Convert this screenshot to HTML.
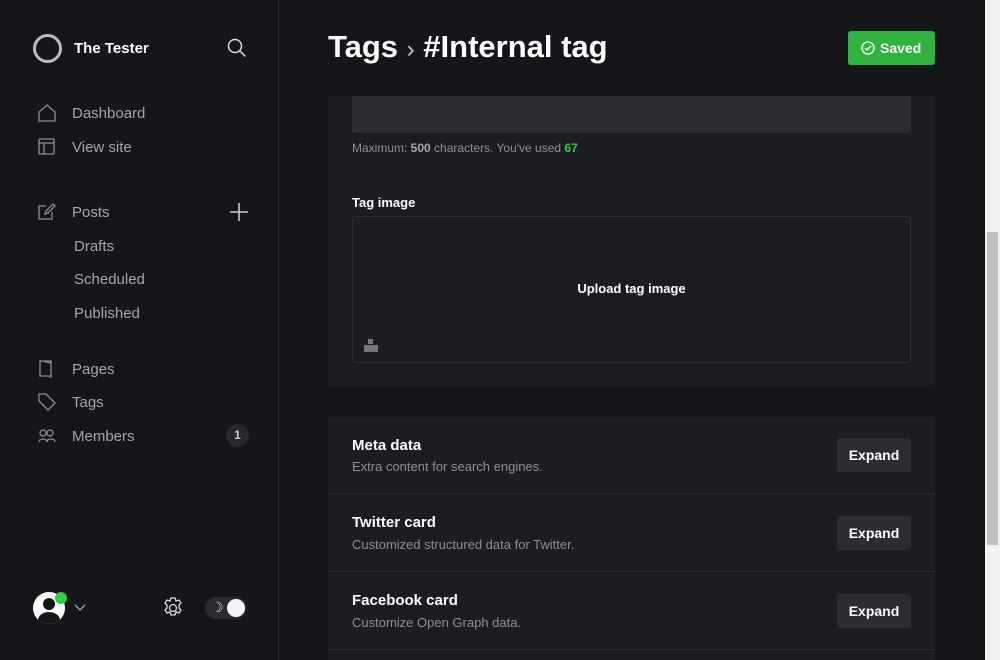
<!DOCTYPE html>
<html><head><meta charset="utf-8"><style>
*{box-sizing:border-box;margin:0;padding:0}
body{width:1000px;height:660px;overflow:hidden;background:#151619;font-family:"Liberation Sans",sans-serif;position:relative;color:#fff}
.sb{position:absolute;left:0;top:0;width:279px;height:660px;background:#151619;border-right:1px solid #26282b}
.t{position:absolute;white-space:nowrap}
.nav{color:#a3a6ab;font-size:15px}
.ic{position:absolute}
.scroll{position:absolute;left:985px;top:0;width:15px;height:660px;background:#f1f1f1}
.thumb{position:absolute;left:987px;top:232px;width:11px;height:313px;background:#c1c1c1}
.card{position:absolute;left:328px;width:607px;background:#1c1d20}
.btn{position:absolute;left:837px;width:74px;height:34px;background:#2b2d31;border-radius:3px;font-size:14px;font-weight:bold;color:#fff;text-align:center;line-height:34px}
.h{font-size:15px;font-weight:bold;left:352px}
.s{font-size:13px;color:#8c9096;left:352px}
</style></head><body>
<div class="sb">
<svg class="ic" style="left:32px;top:33px" width="31" height="31"><circle cx="15.5" cy="15.5" r="13" fill="none" stroke="#bbb" stroke-width="3"/></svg>
<div class="t" style="left:74px;top:40px;font-size:15px;font-weight:bold">The Tester</div>
<svg class="ic" style="left:227px;top:38px" width="20" height="20" fill="none" stroke="#ddd" stroke-width="1.5"><circle cx="8" cy="8" r="6.5"/><path d="M13 13l5.5 5.5"/></svg>
<svg class="ic" style="left:38px;top:104px" width="18" height="18" fill="none" stroke="#8b8e93" stroke-width="1.3"><path d="M1 8L9 1l8 7v9H1z"/></svg>
<div class="t nav" style="left:72px;top:105px">Dashboard</div>
<svg class="ic" style="left:38px;top:138px" width="18" height="18" fill="none" stroke="#8b8e93" stroke-width="1.3"><rect x="1" y="1" width="15" height="15" rx="1"/><path d="M1 5h15M6 5v11"/></svg>
<div class="t nav" style="left:72px;top:139px">View site</div>
<svg class="ic" style="left:38px;top:203px" width="18" height="18" fill="none" stroke="#8b8e93" stroke-width="1.3"><path d="M8 3H1v13h13V9M7 11l1-3 7-7 2 2-7 7z"/></svg>
<div class="t nav" style="left:72px;top:204px">Posts</div>
<svg class="ic" style="left:229px;top:202px" width="20" height="20" stroke="#ccc" stroke-width="1.6"><path d="M10 1v18M1 10h18"/></svg>
<div class="t nav" style="left:74px;top:238px">Drafts</div>
<div class="t nav" style="left:74px;top:271px">Scheduled</div>
<div class="t nav" style="left:74px;top:305px">Published</div>
<svg class="ic" style="left:38px;top:360px" width="18" height="18" fill="none" stroke="#8b8e93" stroke-width="1.3"><path d="M2 1h11v15H2zM5 1l8 2v15"/></svg>
<div class="t nav" style="left:72px;top:361px">Pages</div>
<svg class="ic" style="left:38px;top:393px" width="18" height="18" fill="none" stroke="#8b8e93" stroke-width="1.3"><path d="M1 1h7l9 9-7 7-9-9z"/></svg>
<div class="t nav" style="left:72px;top:394px">Tags</div>
<svg class="ic" style="left:38px;top:428px" width="18" height="16" fill="none" stroke="#8b8e93" stroke-width="1.3"><circle cx="5" cy="5" r="3"/><circle cx="12" cy="5" r="3"/><path d="M1 14c0-4 8-4 8 0M9 14c0-4 8-4 8 0"/></svg>
<div class="t nav" style="left:72px;top:428px">Members</div>
<div class="t" style="left:226px;top:424px;width:23px;height:23px;border-radius:50%;background:#26282c;font-size:12px;font-weight:bold;text-align:center;line-height:23px;color:#ccc">1</div>
<div class="t" style="left:33px;top:592px;width:32px;height:32px;border-radius:50%;background:#fff;overflow:hidden"><div style="position:absolute;left:10px;top:6px;width:12px;height:12px;border-radius:50%;background:#151619"></div><div style="position:absolute;left:5px;top:20px;width:22px;height:16px;border-radius:50%;background:#151619"></div></div>
<div class="t" style="left:55px;top:592px;width:12px;height:12px;border-radius:50%;background:#30cf43"></div>
<svg class="ic" style="left:74px;top:604px" width="12" height="8" fill="none" stroke="#aaa" stroke-width="1.3"><path d="M1 1l5 5 5-5"/></svg>
<svg class="ic" style="left:162px;top:597px" width="22" height="22" fill="none" stroke="#ddd" stroke-width="1.3"><circle cx="11" cy="11" r="3.5"/><path d="M9 1h4l1 3 3-1 2 3-2 2 0 3 2 2-2 3-3-1-1 3H9l-1-3-3 1-2-3 2-2v-3L3 6l2-3 3 1z"/></svg>
<div class="t" style="left:205px;top:597px;width:42px;height:22px;border-radius:11px;background:#2a2c30"></div>
<div class="t" style="left:211px;top:599px;font-size:14px;color:#ddd">☽</div>
<div class="t" style="left:227px;top:599px;width:18px;height:18px;border-radius:50%;background:#f5f5f5"></div>
</div>
<div class="t" style="left:328px;top:29px;font-size:31px;font-weight:bold;letter-spacing:0">Tags <span style="font-weight:normal;font-size:24px;color:#ccc">›</span> #Internal tag</div>
<div class="t" style="left:848px;top:31px;width:87px;height:34px;background:#30b23f;border-radius:3px;font-size:14px;font-weight:bold;line-height:34px;padding-left:32px">Saved</div>
<svg class="ic" style="left:861px;top:41px" width="14" height="14" fill="none" stroke="#fff" stroke-width="1.3"><circle cx="7" cy="7" r="6"/><path d="M4 7l2 2 4-4"/></svg>
<div class="card" style="top:96px;height:291px"></div>
<div class="t" style="left:352px;top:96px;width:559px;height:37px;background:#2c2d31;border-radius:0 0 3px 3px"></div>
<div class="t" style="left:352px;top:141px;font-size:12px;color:#8c9096">Maximum: <b style="color:#aaa">500</b> characters. You've used <b style="color:#30cf43">67</b></div>
<div class="t" style="left:352px;top:195px;font-size:13px;font-weight:bold">Tag image</div>
<div class="t" style="left:352px;top:216px;width:559px;height:147px;border:1px solid #2e3034;border-radius:3px;background:#1c1d20"></div>
<div class="t" style="left:352px;top:281px;width:559px;text-align:center;font-size:13px;font-weight:bold">Upload tag image</div>
<div class="t" style="left:364px;top:345px;width:14px;height:7px;background:#777"></div>
<div class="t" style="left:368px;top:339px;width:5px;height:5px;background:#777"></div>
<div class="card" style="top:417px;height:243px"></div>
<div class="t" style="left:328px;top:493px;width:607px;height:1px;background:#2a2c30"></div>
<div class="t" style="left:328px;top:571px;width:607px;height:1px;background:#2a2c30"></div>
<div class="t" style="left:328px;top:649px;width:607px;height:1px;background:#2a2c30"></div>
<div class="t h" style="top:437px">Meta data</div><div class="t s" style="top:459px">Extra content for search engines.</div><div class="btn" style="top:438px">Expand</div>
<div class="t h" style="top:514px">Twitter card</div><div class="t s" style="top:537px">Customized structured data for Twitter.</div><div class="btn" style="top:516px">Expand</div>
<div class="t h" style="top:592px">Facebook card</div><div class="t s" style="top:615px">Customize Open Graph data.</div><div class="btn" style="top:594px">Expand</div>
<div class="scroll"></div><div class="thumb"></div>
</body></html>
